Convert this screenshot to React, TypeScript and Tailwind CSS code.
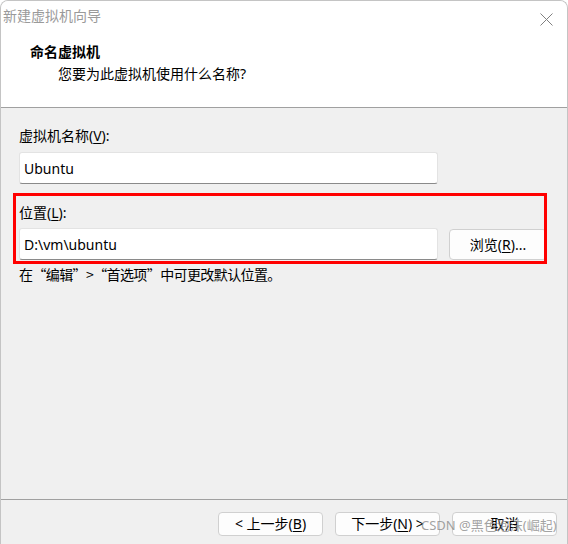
import React from 'react';

const cjk = "font-['Noto_Sans','Noto_Sans_CJK_SC',sans-serif]";

const Key = ({ k }: { k: string }) => <span className="underline underline-offset-2">{k}</span>;

const Btn = ({ children, className = '' }: { children: React.ReactNode; className?: string }) => (
  <button
    className={`flex items-center justify-center rounded-[4px] border border-[#d0d0d0] bg-[#fdfdfd] text-[14px] leading-[20px] text-black ${className}`}
  >
    {children}
  </button>
);

const Field = ({ value }: { value: string }) => (
  <div className="flex h-[32px] w-[419px] items-center rounded-[3px] border border-[#e3e3e3] border-b-[#8a8a8a] bg-white pl-[4px] text-[14px] text-black">
    {value}
  </div>
);

export default function App() {
  return (
    <div className={`relative flex h-[544px] w-[568px] flex-col overflow-hidden rounded-t-[8px] border-t border-x border-[#c4c4c4] bg-[#f0f0f0] ${cjk}`}>
      {/* header */}
      <div className="h-[107px] shrink-0 border-b border-[#a0a0a0] bg-white">
        <div className="flex items-start justify-between pt-[5px] pl-[2px] pr-[14px]">
          <span className="text-[14px] leading-[20px] text-[#9a9a9a]">新建虚拟机向导</span>
          <svg width="13" height="13" viewBox="0 0 13 13" className="mt-[7px]">
            <path d="M0.5 0.5 L12.5 12.5 M12.5 0.5 L0.5 12.5" stroke="#808080" strokeWidth="1" fill="none" />
          </svg>
        </div>
        <div className="mt-[16px] pl-[29px] text-[14px] font-bold leading-[20px] text-black">命名虚拟机</div>
        <div className="mt-[2px] pl-[57px] text-[14px] leading-[20px] text-black">您要为此虚拟机使用什么名称?</div>
      </div>

      {/* body */}
      <div className="flex flex-1 flex-col pl-[18px] pt-[18px]">
        <div className="text-[14px] leading-[20px] text-black">
          虚拟机名称(<Key k="V" />):
        </div>
        <div className="mt-[6px]">
          <Field value="Ubuntu" />
        </div>

        <div className="mt-[19px] text-[14px] leading-[20px] text-black">
          位置(<Key k="L" />):
        </div>
        <div className="mt-[5px] flex items-start gap-[11px]">
          <Field value="D:\vm\ubuntu" />
          <Btn className="mt-px h-[31px] w-[98px]">
            浏览(<Key k="R" />)...
          </Btn>
        </div>
        <div className="mt-[4px] font-['Noto_Sans_CJK_SC',sans-serif] text-[14px] leading-[20px] tracking-[-0.6px] text-black">
          在“编辑”&gt;“首选项”中可更改默认位置。
        </div>
      </div>

      {/* footer */}
      <div className="flex h-[45px] shrink-0 justify-end gap-[12px] border-t border-[#a0a0a0] pr-[10px] pt-[12px]">
        <Btn className="h-[24px] w-[105px]">
          &lt; 上一步(<Key k="B" />)
        </Btn>
        <Btn className="h-[24px] w-[105px]">
          下一步(<Key k="N" />) &gt;
        </Btn>
        <Btn className="h-[24px] w-[105px]">取消</Btn>
      </div>

      {/* annotation overlay */}
      <div className="pointer-events-none absolute left-[12px] top-[192px] h-[71px] w-[534px] border-[3px] border-[#ff0000]" />
      <div className="pointer-events-none absolute left-[420px] top-[514px] text-[13px] leading-[20px] text-[#8a8a8a]/80">
        CSDN @黑色泡沫(崛起)
      </div>
    </div>
  );
}
